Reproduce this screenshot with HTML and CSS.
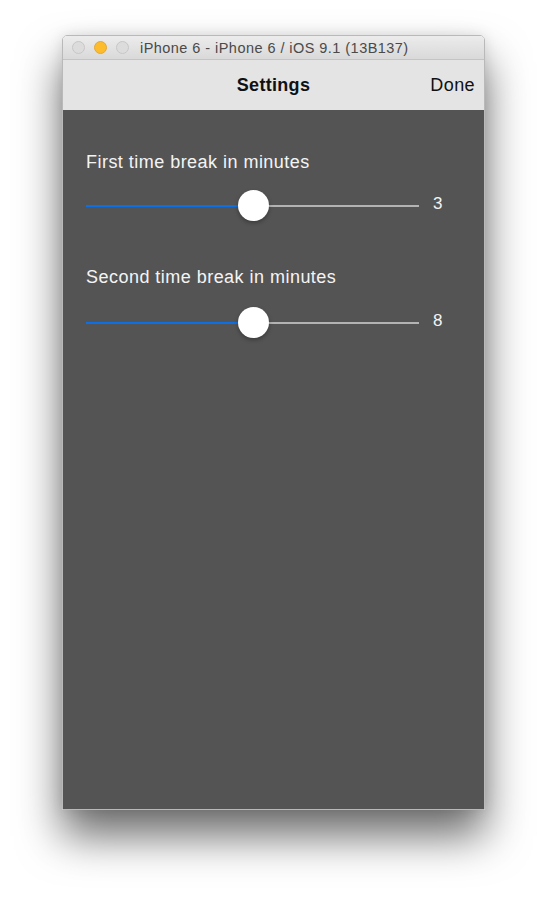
FILE: index.html
```html
<!DOCTYPE html>
<html lang="en">
  <head>
    <meta charset="UTF-8" />
    <meta name="viewport" content="width=device-width, initial-scale=1.0" />
    <title>Settings</title>
    <link rel="stylesheet" href="styles.css">
  </head>
  <body>
    <div class="window">
      <div class="titlebar">
        <ul class="lights">
          <li class="light"></li>
          <li class="light yellow"></li>
          <li class="light"></li>
        </ul>
        <span class="titleText">iPhone 6 - iPhone 6 / iOS 9.1 (13B137)</span>
      </div>
      <div class="navbar">
        <strong class="navTitle">Settings</strong>
        <button class="doneBtn">Done</button>
      </div>
      <div class="content">
        <section class="setting">
          <p class="label">First time break in minutes</p>
          <div class="sliderRow">
            <div class="track">
              <span class="fill"></span>
              <span class="thumb"></span>
            </div>
            <span class="value">3</span>
          </div>
        </section>
        <section class="setting">
          <p class="label">Second time break in minutes</p>
          <div class="sliderRow">
            <div class="track">
              <span class="fill"></span>
              <span class="thumb"></span>
            </div>
            <span class="value">8</span>
          </div>
        </section>
      </div>
    </div>
  </body>
</html>
```

FILE: styles.css
```css
* {
  margin: 0;
  padding: 0;
  box-sizing: border-box;
}

html,
body {
  height: 100%;
}

body {
  background: #fff;
  font-family: "Liberation Sans", Arial, sans-serif;
  padding: 35px 0 0 62px;
  min-height: 900px;
}

.window {
  width: 423px;
  height: 775px;
  display: flex;
  flex-direction: column;
  border: 1px solid #b9b9b9;
  border-radius: 5px 5px 0 0;
  overflow: hidden;
  box-shadow: 0 26px 44px rgba(0, 0, 0, 0.58), 0 0 14px rgba(0, 0, 0, 0.1);
}

.titlebar {
  height: 24px;
  display: flex;
  align-items: center;
  background: linear-gradient(#ececec, #d9d9d9);
  border-bottom: 1px solid #c4c4c4;
  padding-left: 9px;
}

.lights {
  display: flex;
  gap: 9px;
  list-style: none;
}

.light {
  width: 13px;
  height: 13px;
  border-radius: 50%;
  background: #dcdcdc;
  border: 1px solid #c7c7c7;
}

.light.yellow {
  background: #fdbb2e;
  border-color: #e5a833;
}

.titleText {
  margin-left: 11px;
  font-size: 14.5px;
  letter-spacing: 0.45px;
  color: #4a4a4a;
}

.navbar {
  height: 50px;
  display: flex;
  align-items: center;
  justify-content: center;
  position: relative;
  background: #e4e4e4;
}

.navTitle {
  font-size: 18px;
  letter-spacing: 0.3px;
  color: #111;
}

.doneBtn {
  position: absolute;
  right: 9px;
  top: 15px;
  border: none;
  background: none;
  font-family: inherit;
  font-size: 18px;
  letter-spacing: 0.4px;
  color: #111;
  cursor: pointer;
}

.content {
  flex: 1;
  background: #545454;
  padding: 41px 0 0 23px;
}

.setting + .setting {
  margin-top: 45px;
}

.label {
  font-size: 18px;
  line-height: 22px;
  letter-spacing: 0.47px;
  color: #f4f4f4;
  margin-bottom: 17px;
}

.setting + .setting .label {
  margin-bottom: 19px;
}

.sliderRow {
  display: flex;
  align-items: center;
  height: 31px;
}

.track {
  position: relative;
  width: 333px;
  height: 2px;
  background: #b3b3b3;
}

.fill {
  display: block;
  width: 167px;
  height: 2px;
  background: #0d6fe6;
}

.thumb {
  position: absolute;
  left: 152px;
  top: -15px;
  width: 31px;
  height: 31px;
  border-radius: 50%;
  background: #fff;
  box-shadow: 0 2px 4px rgba(0, 0, 0, 0.3);
}

.value {
  margin-left: 14px;
  margin-bottom: 3px;
  font-size: 17px;
  color: #f4f4f4;
}
```
